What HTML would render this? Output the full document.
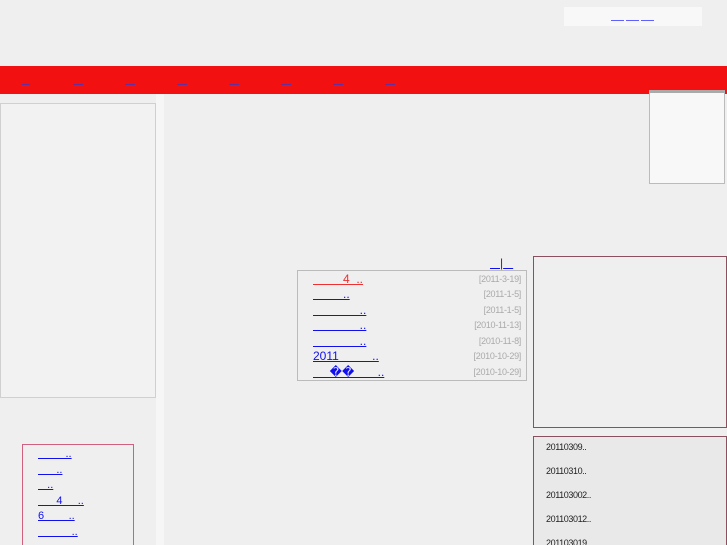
<!DOCTYPE html>
<html><head><meta charset="utf-8"><style>
*{margin:0;padding:0;box-sizing:border-box}
html,body{width:727px;height:545px;overflow:hidden}
body{background:#efefef;position:relative;font-family:"Liberation Sans","Noto Sans CJK SC",sans-serif;font-size:11px}
.a{position:absolute}
a{color:#1010ee;text-decoration:underline;white-space:pre}
.nv{position:absolute;top:84px;height:1px;width:10px;background:#6030a0}
.row{position:absolute;left:15px;height:15.5px;line-height:15px;width:214px;font-size:12px}
.row a{position:absolute;left:0}
.row span{position:absolute;right:6px;color:#aaa;font-size:9px;letter-spacing:-.3px}
.lb a{display:block;height:15.5px;line-height:15px;font-size:11px}
.rb div{height:24px;line-height:20px;font-size:9px;color:#222;letter-spacing:-.4px}
.u{position:absolute;height:1px;background:#6060ff}
</style></head><body>
<div class="a" style="left:564px;top:7px;width:138px;height:19px;background:#f8f8f8"></div>
<div class="u" style="left:611px;top:20px;width:13px"></div>
<div class="u" style="left:626px;top:20px;width:13px"></div>
<div class="u" style="left:641px;top:20px;width:13px"></div>
<div class="a" style="left:0;top:66px;width:727px;height:28px;background:#f21010"></div>
<div class="nv" style="left:22px;width:8px"></div><div class="nv" style="left:73px"></div><div class="nv" style="left:125px"></div><div class="nv" style="left:177px"></div><div class="nv" style="left:229px"></div><div class="nv" style="left:281px"></div><div class="nv" style="left:333px"></div><div class="nv" style="left:385px"></div>
<div class="a" style="left:156px;top:94px;width:8px;height:451px;background:#f6f6f6"></div>
<div class="a" style="left:0;top:103px;width:156px;height:295px;border:1px solid #d0d0d0;background:#f2f2f2"></div>
<div class="a" style="left:649px;top:90px;width:76px;height:94px;background:#f8f8f8;border:1px solid #bbb;border-top:3px solid #aaa"></div>
<div class="a" style="left:490px;top:256px;font-size:12px"><a>   </a><span style="color:#333">|</span><a>   </a></div>
<div class="a" style="left:297px;top:270px;width:230px;height:111px;border:1px solid #bbb">
<div class="row" style="top:1px"><a style="color:#ee3030">         4  ..</a><span>[2011-3-19]</span></div>
<div class="row" style="top:16px"><a>         ..</a><span>[2011-1-5]</span></div>
<div class="row" style="top:32px"><a>              ..</a><span>[2011-1-5]</span></div>
<div class="row" style="top:47px"><a>              ..</a><span>[2010-11-13]</span></div>
<div class="row" style="top:63px"><a>              ..</a><span>[2010-11-8]</span></div>
<div class="row" style="top:78px"><a>2011          ..</a><span>[2010-10-29]</span></div>
<div class="row" style="top:94px"><a>     ��       ..</a><span>[2010-10-29]</span></div>
</div>
<div class="a" style="left:533px;top:256px;width:194px;height:172px;border:1px solid #8a5060"></div>
<div class="a rb" style="left:533px;top:436px;width:194px;height:112px;border:1px solid #8a5060;background:#e9e9e9;padding:0 0 0 12px">
<div>20110309..</div><div>20110310..</div><div>201103002..</div><div>201103012..</div><div>201103019..</div>
</div>
<div class="a lb" style="left:22px;top:444px;width:112px;height:110px;border:1px solid #d06080;padding:2px 0 0 15px">
<a>         ..</a><a>      ..</a><a>   ..</a><a>      4     ..</a><a>6        ..</a><a>           ..</a>
</div>
</body></html>
